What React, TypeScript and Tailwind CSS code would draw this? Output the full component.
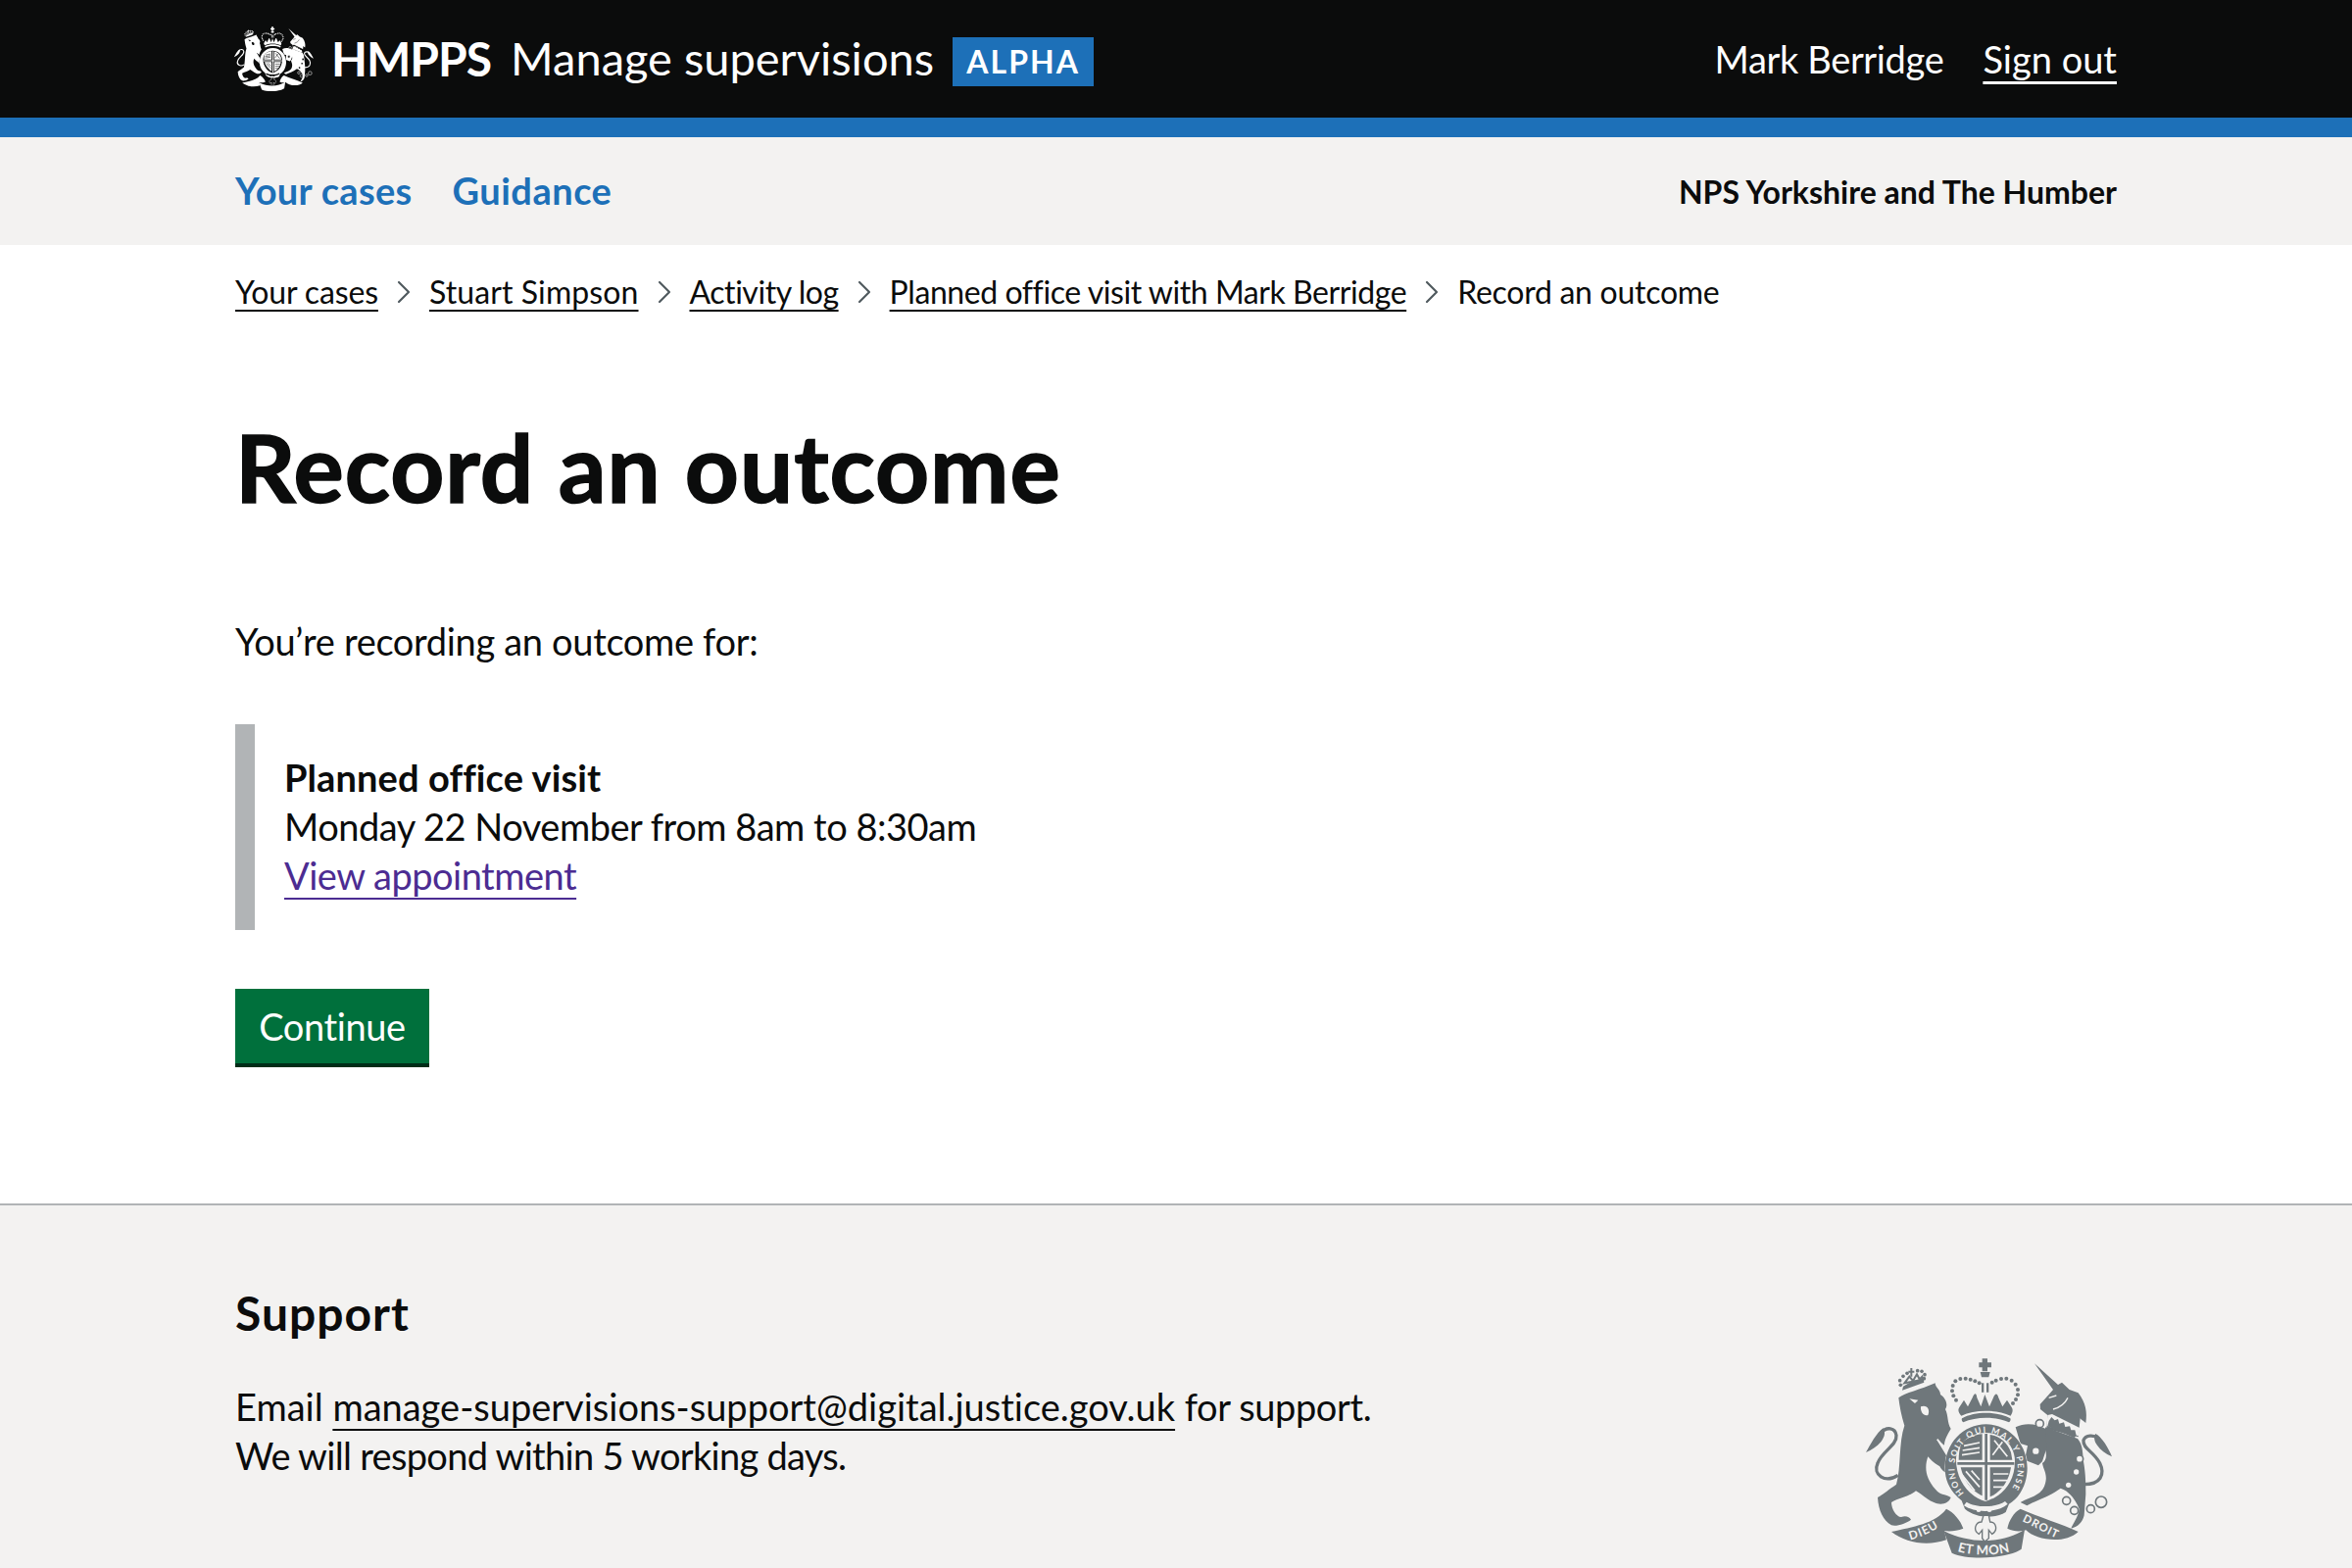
import React from 'react';
import { ChevronRight } from 'lucide-react';

const Crest: React.FC<{ className: string; knock: string; motto?: boolean }> = ({ className, knock, motto = true }) => (
  <svg viewBox="0 0 900 720" className={className} fill="currentColor" aria-hidden="true">
    <defs>
      <path id="garter-ring" d="M372 497 A97 108 0 1 1 508 497" />
      <path id="ribbon-left" d="M208 640 C250 628 290 610 325 578" />
      <path id="ribbon-mid" d="M345 672 C395 690 480 690 530 670" />
      <path id="ribbon-right" d="M550 582 C590 600 630 628 690 648" />
    </defs>

    {/* lion */}
    <path d="M172 205 C190 190 240 180 284 160 C285 175 300 180 300 195 C315 205 325 225 315 240 C325 260 320 280 332 300 C320 320 312 335 312 350 L290 335 L320 385 C335 400 345 425 335 440 C320 438 305 430 298 415 C280 405 270 395 262 385 C250 420 255 450 285 485 C300 505 320 500 332 510 C325 530 300 535 280 525 C262 520 245 500 225 490 C210 505 175 510 150 525 C150 545 165 570 180 570 C195 565 205 570 210 578 C195 590 165 600 150 595 C125 580 110 550 108 510 C125 500 150 480 165 470 C180 420 172 340 190 290 C180 260 175 230 172 205Z" />
    <path d="M170 442 C130 468 92 440 108 405 C120 370 168 350 165 320 C162 296 135 292 118 312" fill="none" stroke="currentColor" strokeWidth="10" />
    <path d="M125 298 C105 310 85 350 72 372 C90 365 105 355 118 340 C125 330 135 315 125 298Z" />
    <path d="M205 208 L232 212 L222 222Z M240 232 C258 225 270 240 262 258 C250 262 238 250 240 232Z" fill={knock} />
    <path d="M290 332 L340 388" stroke={knock} strokeWidth="5" fill="none" />
    {/* lion crown */}
    <path d="M186 170 L183 182 L250 158 L248 145 C228 148 205 158 186 170Z" />
    <path d="M190 160 L205 140 L216 153 L228 133 L236 148 L244 140 L246 150Z" fill="none" stroke="currentColor" strokeWidth="6" />
    {[[176, 152], [186, 139], [198, 130], [230, 122], [243, 124], [252, 134], [250, 146], [178, 166]].map(([x, y]) => (
      <circle key={`${x}-${y}`} cx={x} cy={y} r="5.5" />
    ))}
    <path d="M202 122 H208 V114 H214 V122 H220 V128 H214 V140 H208 V128 H202Z" />

    {/* centre crown */}
    <path d="M428 85 H444 V97 H456 V112 H444 V124 H428 V112 H418 V97 H428Z" />
    <path d="M422 126 H452 L448 142 H426Z" />
    <path d="M426 160 H433 V188 H426Z M441 160 H448 V188 H441Z" />
    {[
      [346, 154], [361, 147], [377, 146], [392, 149], [406, 154], [419, 160],
      [458, 158], [470, 152], [486, 147], [502, 146], [518, 152], [530, 164],
      [338, 168], [336, 184], [340, 199], [348, 212], [537, 180], [537, 196], [531, 210], [522, 222],
    ].map(([x, y]) => (
      <circle key={`${x}-${y}`} cx={x} cy={y} r="6" />
    ))}
    <path d="M358 234 L372 212 L384 232 L398 205 C404 190 410 188 412 205 L424 232 L436 195 L450 232 L462 205 C468 190 474 190 478 205 L490 232 L504 212 L518 234 C524 242 520 252 515 260 C470 240 405 240 364 260 C356 252 352 242 358 234Z" />
    <path d="M366 268 C405 246 475 246 514 268 C516 272 514 276 510 280 C470 262 410 262 370 280 C366 276 364 272 366 268Z" />

    {/* unicorn */}
    <path d="M588 100 L660 165 L672 158 L695 180 L722 190 C745 220 750 250 745 282 C738 275 730 272 728 268 L722 325 L625 300 L628 258 L606 240 L605 225 L630 197 L645 180Z" />
    <path d="M622 295 L720 330 C738 350 735 380 738 400 C745 440 745 470 745 500 L740 565 C735 585 722 600 700 605 C705 590 722 570 725 545 C715 520 695 490 668 482 C630 510 590 520 565 535 L545 525 C570 510 610 505 620 470 C630 440 615 425 612 405 C628 395 625 370 618 355 C612 340 615 315 622 295Z" />
    <path d="M622 300 C595 285 560 280 530 295 L545 345 L567 352 L558 395 L600 412 L612 400 L625 360Z" />
    <path d="M632 205 L655 198 M645 240 C665 235 680 225 690 205" stroke={knock} strokeWidth="4" fill="none" />
    <path d="M628 258 L642 255 L728 298 L722 322 L625 290Z" fill={knock} />
    <path d="M632 276 L640 264 L650 274 L660 270 L664 284 L678 280 L682 294 L696 292 L700 304 L712 304 L716 320 L710 328 L628 292Z" />
    <path d="M740 470 C790 470 805 440 788 405 C770 370 735 360 738 335 C745 318 770 318 785 330" fill="none" stroke="currentColor" strokeWidth="10" />
    <path d="M775 315 C795 325 815 360 825 385 C805 375 790 365 780 350 C772 340 768 325 775 315Z" />
    <circle cx="604" cy="284" r="12" fill={knock} stroke="currentColor" strokeWidth="5" />
    <circle cx="592" cy="368" r="12" fill={knock} stroke="currentColor" strokeWidth="5" />
    <circle cx="726" cy="392" r="11" fill={knock} stroke="currentColor" strokeWidth="5" />
    <circle cx="716" cy="432" r="8" fill={knock} />
    <circle cx="692" cy="472" r="8" fill={knock} />
    <circle cx="686" cy="520" r="12" fill={knock} stroke="currentColor" strokeWidth="5" />
    <circle cx="710" cy="550" r="12" fill={knock} stroke="currentColor" strokeWidth="5" />
    <circle cx="760" cy="545" r="12" fill={knock} stroke="currentColor" strokeWidth="5" />
    <circle cx="792" cy="524" r="17" fill={knock} stroke="currentColor" strokeWidth="5" />

    {/* garter and shield, over the beasts' paws */}
    <ellipse cx="440" cy="417" rx="127" ry="133" fill={knock} />
    <path d="M440 286 C510 286 566 345 566 420 C566 465 545 510 510 530 L500 555 C470 575 410 575 375 545 L365 520 C335 495 314 465 314 420 C314 345 370 286 440 286Z" />
    <path d="M348 395 C348 345 390 312 438 312 C488 312 528 350 528 400 C528 470 482 510 438 522 C392 510 348 460 348 395Z" fill={knock} />
    <path d="M436 315 H444 V518 H436Z M352 402 H526 V410 H352Z" />
    <path d="M364 344 C380 328 405 318 428 316 V395 H356 C356 378 358 360 364 344Z M452 318 C480 322 505 340 516 372 L520 395 H452Z M362 418 H428 V505 C395 490 372 460 362 418Z M452 418 H516 C510 460 485 495 452 508Z" />
    <path d="M372 352 L420 342 M368 366 L420 358 M366 380 L420 372 M378 430 L420 478 M395 428 L420 456 M366 440 L405 490 M462 438 H508 M462 458 H504 M462 478 H494 M465 335 L505 385 M490 340 L460 380" stroke={knock} strokeWidth="5" fill="none" />
    {motto && (
      <text fontSize="26" fontWeight="700" fill={knock}>
        <textPath href="#garter-ring" textLength="470" lengthAdjust="spacing">HONI SOIT QUI MAL Y PENSE</textPath>
      </text>
    )}
    <path d="M380 524 C410 542 470 542 498 522 L506 530 C475 558 405 558 372 535Z" fill={knock} />
    <circle cx="417" cy="548" r="7" fill={knock} />
    <circle cx="450" cy="548" r="7" fill={knock} />

    {/* motto ribbon */}
    <path d="M150 615 C215 600 285 590 318 545 C340 555 362 580 370 605 C350 612 330 615 312 612 L318 640 C260 660 195 650 150 615Z" />
    <path d="M722 615 C670 590 600 570 545 545 C525 555 510 580 505 605 C525 615 545 615 562 610 C590 640 680 655 722 615Z" />
    <path d="M310 612 C395 655 490 650 558 608 L548 668 C510 695 390 705 335 680Z" />
    <path d="M432 565 H448 L452 585 C470 585 478 610 458 622 L448 610 L448 635 L436 645 L428 635 V610 L418 622 C398 610 408 585 426 585Z" fill={knock} stroke="currentColor" strokeWidth="4" />
    {motto && (
      <>
        <text fontSize="36" fontWeight="700" fill={knock} letterSpacing="3"><textPath href="#ribbon-left">DIEU</textPath></text>
        <text fontSize="40" fontWeight="700" fill={knock} letterSpacing="1"><textPath href="#ribbon-mid" startOffset="4%">ET MON</textPath></text>
        <text fontSize="34" fontWeight="700" fill={knock} letterSpacing="3"><textPath href="#ribbon-right">DROIT</textPath></text>
      </>
    )}
  </svg>
);

export default function App() {
  return (
    <div className="flex h-[1600px] flex-col overflow-hidden bg-white font-[Lato,sans-serif] text-[38px] leading-[50px] text-[#0b0c0c] [font-variant-ligatures:none]">
      <header className="h-[140px] border-b-[20px] border-[#1d70b8] bg-[#0b0c0c] text-white">
        <div className="mx-auto flex h-full w-[1920px] items-center justify-between">
          <div className="flex items-center">
            <Crest className="-mt-[6px] -ml-[9px] h-[78px] w-[97px] text-white" knock="#0b0c0c" motto={false} />
            <span className="ml-[10px] text-[48px] font-bold tracking-[-1px]">HMPPS</span>
            <span className="ml-[20px] -mt-[2px] text-[47px]">Manage supervisions</span>
            <span className="ml-[19px] mt-[5px] flex h-[50px] w-[144px] items-center justify-center bg-[#1d70b8] text-[32px] font-bold tracking-[2px]">ALPHA</span>
          </div>
          <div className="flex items-center gap-[40px]">
            <span className="tracking-[-0.35px]">Mark Berridge</span>
            <a className="underline underline-offset-[8px] decoration-[3px]" href="#">Sign out</a>
          </div>
        </div>
      </header>

      <nav className="h-[110px] bg-[#f3f2f1]">
        <div className="mx-auto flex h-full w-[1920px] items-center justify-between">
          <div className="-mt-[2px] flex gap-[41px] font-bold text-[#1d70b8]">
            <a className="tracking-[0.3px]" href="#">Your cases</a>
            <a className="tracking-[0.5px]" href="#">Guidance</a>
          </div>
          <span className="mt-[2px] text-[32px] font-bold">NPS Yorkshire and The Humber</span>
        </div>
      </nav>

      <main className="mx-auto w-[1920px] flex-none">
        <ol className="mt-[28px] flex items-center text-[32px] leading-[40px]">
          <li className="flex items-center">
            <a className="underline underline-offset-[6px] decoration-2 tracking-[-0.15px]" href="#">Your cases</a>
            <ChevronRight className="mx-[6px] h-[40px] w-[40px] text-[#505a5f]" strokeWidth={1.3} />
          </li>
          <li className="flex items-center">
            <a className="underline underline-offset-[6px] decoration-2 tracking-[0.1px]" href="#">Stuart Simpson</a>
            <ChevronRight className="mx-[6px] h-[40px] w-[40px] text-[#505a5f]" strokeWidth={1.3} />
          </li>
          <li className="flex items-center">
            <a className="underline underline-offset-[6px] decoration-2 tracking-[-0.45px]" href="#">Activity log</a>
            <ChevronRight className="mx-[6px] h-[40px] w-[40px] text-[#505a5f]" strokeWidth={1.3} />
          </li>
          <li className="flex items-center">
            <a className="underline underline-offset-[6px] decoration-2 tracking-[-0.43px]" href="#">Planned office visit with Mark Berridge</a>
            <ChevronRight className="mx-[6px] h-[40px] w-[40px] text-[#505a5f]" strokeWidth={1.3} />
          </li>
          <li className="tracking-[-0.27px]">Record an outcome</li>
        </ol>

        <h1 className="mt-[108px] text-[96px] font-bold leading-[100px] tracking-[1px] [-webkit-text-stroke:1.5px_#0b0c0c]">Record an outcome</h1>

        <p className="mt-[103px] tracking-[-0.33px]">You’re recording an outcome for:</p>

        <div className="mt-[60px] h-[210px] w-full border-l-[20px] border-[#b1b4b6] pt-[29px] pl-[30px]">
          <p className="font-bold tracking-[0.1px]">Planned office visit</p>
          <p className="tracking-[-0.5px]">Monday 22 November from 8am to 8:30am</p>
          <a className="text-[#4c2c92] underline underline-offset-[8px] decoration-2 tracking-[-0.5px]" href="#">View appointment</a>
        </div>

        <button className="mt-[60px] block h-[80px] w-[198px] bg-[#00703c] pb-[4px] text-white tracking-[-0.4px] shadow-[inset_0_-4px_0_#002d18]">Continue</button>
      </main>

      <footer className="mt-[139px] flex-1 border-t-2 border-[#b1b4b6] bg-[#f3f2f1]">
        <div className="mx-auto flex h-full w-[1920px] justify-between">
          <div className="pt-[80px]">
            <h2 className="text-[48px] font-bold leading-[60px] tracking-[1px]">Support</h2>
            <p className="mt-[40px]">
              Email <a className="underline underline-offset-[8px] decoration-2" href="#">manage-supervisions-support@digital.justice.gov.uk</a> <span className="tracking-[-0.4px]">for support.</span>
              <br />
              <span className="tracking-[-0.7px]">We will respond within 5 working days.</span>
            </p>
          </div>
          <Crest className="mt-[128px] -mr-[20px] h-[240px] w-[300px] text-[#6f777b]" knock="#f3f2f1" />
        </div>
      </footer>
    </div>
  );
}
